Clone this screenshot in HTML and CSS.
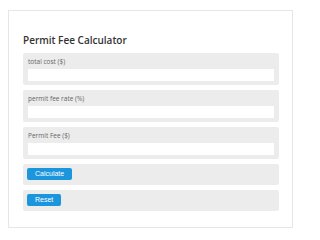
FILE: index.html
```html
<!DOCTYPE html>
<html>
<head>
<meta charset="utf-8">
<link rel="stylesheet" href="styles.css">
</head>
<body>
<div class="card">
  <h2 class="title">Permit Fee Calculator</h2>
  <div class="group">
    <label class="label">total cost ($)</label>
    <input class="field" type="text">
  </div>
  <div class="group">
    <label class="label">permit fee rate (%)</label>
    <input class="field" type="text">
  </div>
  <div class="group">
    <label class="label">Permit Fee ($)</label>
    <input class="field" type="text">
  </div>
  <div class="group btn-group">
    <button class="btn">Calculate</button>
  </div>
  <div class="group btn-group">
    <button class="btn">Reset</button>
  </div>
</div>
</body>
</html>
```

FILE: styles.css
```css
html, body {
  background: #ffffff;
}
body {
  margin: 10px 7px 0 8px;
  font-family: "Open Sans", "DejaVu Sans", sans-serif;
}
.card {
  box-sizing: border-box;
  width: 285px;
  height: 218px;
  border: 1px solid #e6e6e6;
  padding: 22px 13px 0 14px;
  display: flex;
  flex-direction: column;
  gap: 5px;
}
.title {
  margin: 0 0 1px 0;
  font-size: 10px;
  line-height: 14px;
  font-weight: 600;
  color: #333333;
}
.group {
  background: #ececec;
  border-radius: 2px;
  padding: 4px 5px;
  display: flex;
  flex-direction: column;
}
.label {
  font-size: 6.5px;
  line-height: 9px;
  color: #666666;
  margin-bottom: 3px;
}
.field {
  box-sizing: border-box;
  height: 12px;
  width: 100%;
  border: none;
  background: #ffffff;
  padding: 0;
  margin: 0;
  outline: none;
}
.btn-group {
  padding: 4px 5px 5px 4px;
  align-items: flex-start;
}
.btn {
  height: 12px;
  padding: 0 8px;
  border: none;
  border-radius: 2px;
  background: #1b95dc;
  color: #ffffff;
  font-family: "Liberation Sans", Arial, sans-serif;
  font-size: 7px;
  line-height: 12px;
}
```
